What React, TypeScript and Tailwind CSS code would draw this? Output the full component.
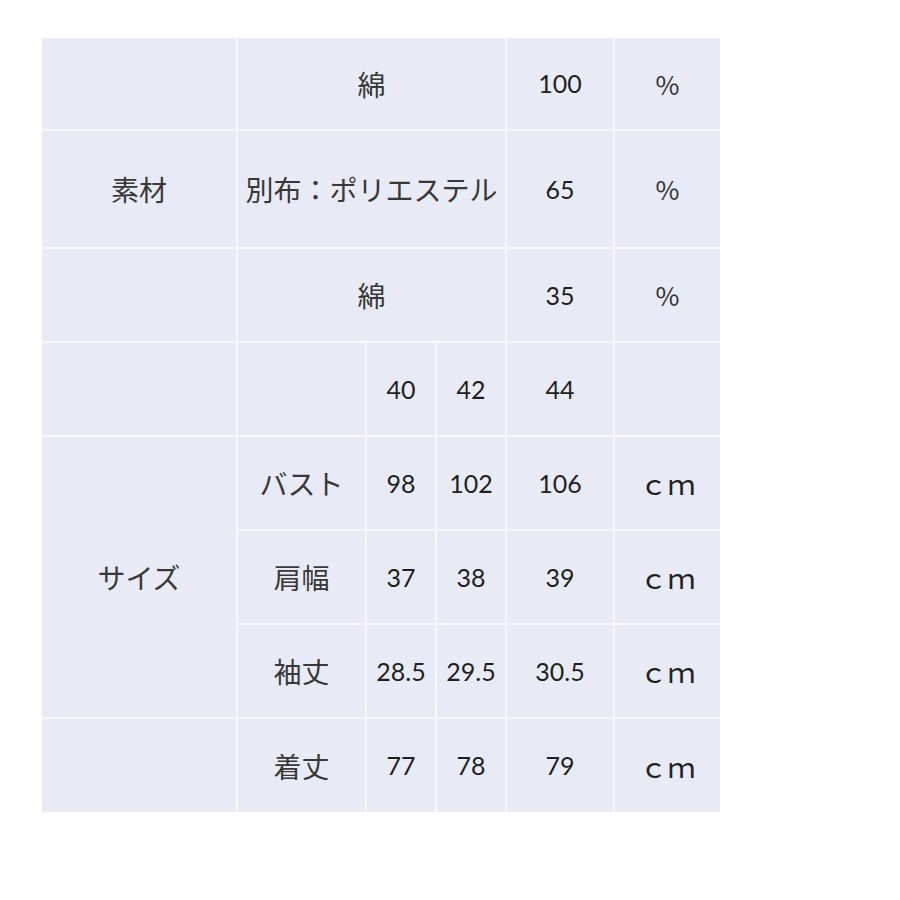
import React from "react";

const jp = "font-['Noto_Sans_CJK_JP',sans-serif] text-[28px] text-[#383838]";
const num = "font-['Lato','Noto_Sans_CJK_JP',sans-serif] text-[25px] text-[#1f1f1f]";
const pct = "font-['Noto_Sans_CJK_JP',sans-serif] text-[26px] text-[#333]";
const cm = "font-['Noto_Sans_CJK_JP',sans-serif] text-[28px] text-[#222]";

function Cell({
  children,
  className = "",
  kind = "jp",
}: {
  children?: React.ReactNode;
  className?: string;
  kind?: "jp" | "num" | "pct" | "cm";
}) {
  const f = kind === "jp" ? jp : kind === "num" ? num : kind === "pct" ? pct : cm;
  return (
    <div
      className={`bg-[#e8ebf5] flex items-center justify-center leading-none whitespace-nowrap ${f} ${className}`}
    >
      {children}
    </div>
  );
}

export default function App() {
  return (
    <div className="w-[900px] h-[900px] bg-white pt-[38px] pl-[42px]">
      <div className="grid w-max grid-cols-[194px_127px_68px_68px_106px_105px] grid-rows-[91px_116px_92px_92px_92px_92px_92px_93px] gap-[2px] bg-[#f7f8fc]">
        {/* Row 1 */}
        <Cell />
        <Cell className="col-span-3">綿</Cell>
        <Cell kind="num">100</Cell>
        <Cell kind="pct">%</Cell>
        {/* Row 2 */}
        <Cell>素材</Cell>
        <Cell className="col-span-3">別布：ポリエステル</Cell>
        <Cell kind="num">65</Cell>
        <Cell kind="pct">%</Cell>
        {/* Row 3 */}
        <Cell />
        <Cell className="col-span-3">綿</Cell>
        <Cell kind="num">35</Cell>
        <Cell kind="pct">%</Cell>
        {/* Row 4 */}
        <Cell />
        <Cell />
        <Cell kind="num">40</Cell>
        <Cell kind="num">42</Cell>
        <Cell kind="num">44</Cell>
        <Cell />
        {/* Row 5 */}
        <Cell className="row-span-3">サイズ</Cell>
        <Cell>バスト</Cell>
        <Cell kind="num">98</Cell>
        <Cell kind="num">102</Cell>
        <Cell kind="num">106</Cell>
        <Cell kind="cm">ｃｍ</Cell>
        {/* Row 6 */}
        <Cell>肩幅</Cell>
        <Cell kind="num">37</Cell>
        <Cell kind="num">38</Cell>
        <Cell kind="num">39</Cell>
        <Cell kind="cm">ｃｍ</Cell>
        {/* Row 7 */}
        <Cell>袖丈</Cell>
        <Cell kind="num">28.5</Cell>
        <Cell kind="num">29.5</Cell>
        <Cell kind="num">30.5</Cell>
        <Cell kind="cm">ｃｍ</Cell>
        {/* Row 8 */}
        <Cell />
        <Cell>着丈</Cell>
        <Cell kind="num">77</Cell>
        <Cell kind="num">78</Cell>
        <Cell kind="num">79</Cell>
        <Cell kind="cm">ｃｍ</Cell>
      </div>
    </div>
  );
}
